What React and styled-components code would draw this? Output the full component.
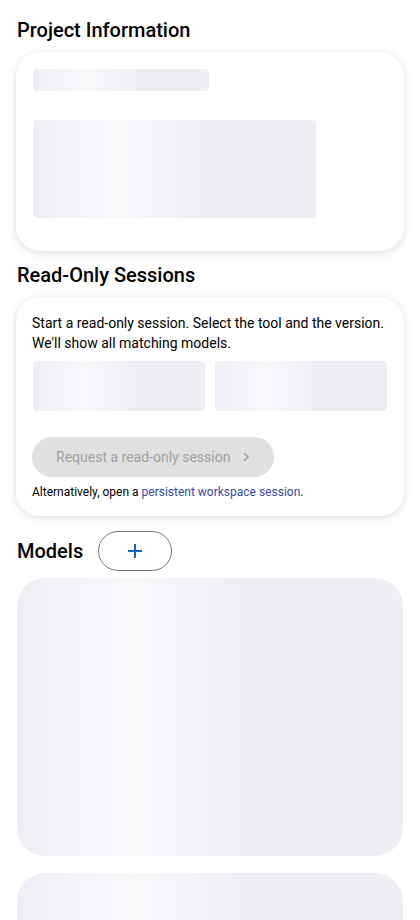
import React from 'react';
import styled, { createGlobalStyle } from 'styled-components';

const GlobalStyle = createGlobalStyle`
  body {
    margin: 0;
    background: #ffffff;
    font-family: Roboto, "Liberation Sans", sans-serif;
    color: #000000;
  }
`;

const Page = styled.main`
  padding: 16px 16px 0;
  display: flex;
  flex-direction: column;
`;

const Section = styled.section`
  display: flex;
  flex-direction: column;
  gap: 8px;
  margin-bottom: ${({ $space }) => $space || 10}px;
`;

const Heading = styled.h2`
  margin: 0 0 0 1px;
  font-size: 20px;
  line-height: 28px;
  font-weight: 500;
`;

const Card = styled.div`
  background: #ffffff;
  border-radius: 24px;
  box-shadow: 0 2px 8px rgba(0, 0, 0, 0.12), 0 0 2px rgba(0, 0, 0, 0.04);
  padding: ${({ $pad }) => $pad};
  display: flex;
  flex-direction: column;
`;

const Skeleton = styled.div`
  width: ${({ $w }) => $w || '100%'};
  height: ${({ $h }) => $h}px;
  border-radius: ${({ $r }) => $r || 4}px;
  background: linear-gradient(
    90deg,
    #eeeff4 0%,
    #f7f8fa 30%,
    #eeeff4 58%,
    #eeeff4 100%
  );
  flex-shrink: 0;
`;

const Intro = styled.p`
  margin: 0;
  font-size: 14px;
  line-height: 20px;
`;

const PickerRow = styled.div`
  display: grid;
  grid-template-columns: 1fr 1fr;
  gap: 10px;
  margin: 8px 1px 26px;
`;

const RequestButton = styled.button`
  align-self: flex-start;
  height: 40px;
  border: none;
  border-radius: 20px;
  background: #e0e0e0;
  color: #a0a0a0;
  font-family: Roboto, "Liberation Sans", sans-serif;
  font-size: 14px;
  padding: 0 24px;
  display: flex;
  align-items: center;
  gap: 12px;
  cursor: default;
`;

const Note = styled.p`
  margin: 7px 0 0;
  font-size: 12px;
  line-height: 16px;

  a {
    color: #3949ab;
    text-decoration: none;
  }
`;

const ModelsHeader = styled.div`
  display: flex;
  align-items: center;
  gap: 15px;
  margin-top: 5px;
`;

const AddButton = styled.button`
  width: 74px;
  height: 40px;
  border-radius: 20px;
  border: 1px solid #79747e;
  background: #ffffff;
  display: flex;
  align-items: center;
  justify-content: center;
  padding: 0;
  cursor: pointer;
`;

const ModelList = styled.div`
  display: flex;
  flex-direction: column;
  gap: 17px;
  margin: 7px 1px 0;
`;

const Chevron = () => (
  <svg width="8" height="12" viewBox="0 0 8 12" fill="none">
    <path d="M2 2l4 4-4 4" stroke="#a0a0a0" strokeWidth="1.6" />
  </svg>
);

const Plus = () => (
  <svg width="16" height="16" viewBox="0 0 16 16" fill="none">
    <path d="M8 1v14M1 8h14" stroke="#1565c0" strokeWidth="2" />
  </svg>
);

export default function App() {
  return (
    <>
      <GlobalStyle />
      <Page>
        <Section>
          <Heading>Project Information</Heading>
          <Card $pad="17px 17px 33px">
            <Skeleton $w="176px" $h={22} />
            <Skeleton $w="283px" $h={98} style={{ marginTop: 29 }} />
          </Card>
        </Section>

        <Section>
          <Heading>Read-Only Sessions</Heading>
          <Card $pad="16px 16px 16px">
            <Intro>
              Start a read-only session. Select the tool and the version.
              <br />
              We'll show all matching models.
            </Intro>
            <PickerRow>
              <Skeleton $h={50} />
              <Skeleton $h={50} />
            </PickerRow>
            <RequestButton disabled>
              Request a read-only session
              <Chevron />
            </RequestButton>
            <Note>
              Alternatively, open a <a href="#">persistent workspace session</a>.
            </Note>
          </Card>
        </Section>

        <ModelsHeader>
          <Heading>Models</Heading>
          <AddButton aria-label="Add model">
            <Plus />
          </AddButton>
        </ModelsHeader>
        <ModelList>
          <Skeleton $h={278} $r={28} />
          <Skeleton $h={278} $r={28} />
        </ModelList>
      </Page>
    </>
  );
}
